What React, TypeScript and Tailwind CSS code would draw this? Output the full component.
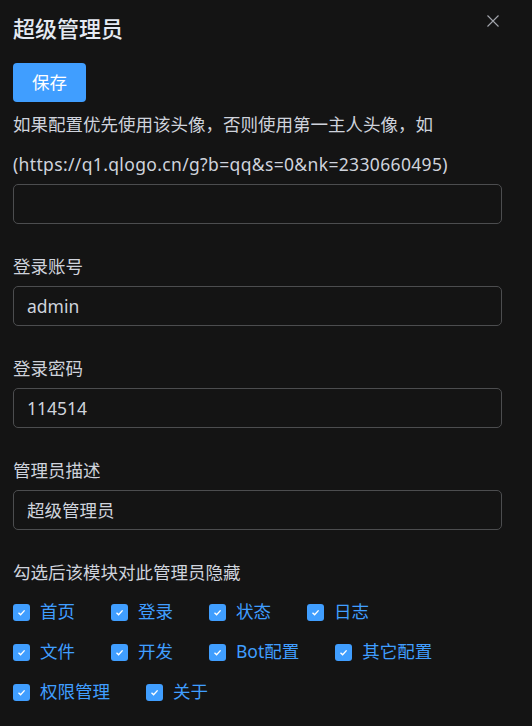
import React from 'react';

const font = { fontFamily: '"Noto Sans", "Noto Sans CJK SC", sans-serif' };

const modules = [
  ['首页', '登录', '状态', '日志'],
  ['文件', '开发', 'Bot配置', '其它配置'],
  ['权限管理', '关于'],
];

const Check = ({ label }: { label: string }) => (
  <div className="flex items-center mr-[36px] h-[40px]">
    <span className="w-[17px] h-[17px] rounded-[3px] bg-[#409eff] flex items-center justify-center">
      <svg width="11" height="11" viewBox="0 0 11 11" fill="none">
        <path d="M2.5 5.8 L4.6 7.8 L8.6 3.4" stroke="white" strokeWidth="1.4" />
      </svg>
    </span>
    <span className="ml-[10px] text-[17.5px] text-[#409eff] leading-none">{label}</span>
  </div>
);

const Field = ({ label, value }: { label: string; value: string }) => (
  <div className="mt-[22px]">
    <div className="h-[40px] leading-[40px] text-[17.5px] text-[#cfd3dc]">{label}</div>
    <div className="h-[40px] rounded-[5px] border border-[#4c4d4f] flex items-center px-[13px] text-[17.5px] text-[#cfd3dc]">
      {value}
    </div>
  </div>
);

export default function App() {
  return (
    <div className="w-[532px] h-[726px] overflow-hidden bg-[#141414] pl-[13px] pr-[30px]" style={font}>
      <div className="flex items-start justify-between h-[63px]">
        <div className="mt-[13px] text-[22px] leading-[30px] font-medium text-[#e5eaf3]">超级管理员</div>
        <svg className="mt-[15px] mr-[3px]" width="12" height="12" viewBox="0 0 12 12" fill="none">
          <path d="M0.5 0.5 L11.5 11.5 M11.5 0.5 L0.5 11.5" stroke="#a3a6ad" strokeWidth="1.1" />
        </svg>
      </div>
      <button className="w-[73px] h-[39px] rounded-[4px] bg-[#409eff] text-white text-[17.5px] flex items-center justify-center">
        保存
      </button>
      <div className="mt-[2px] text-[17.5px] leading-[40px] text-[#cfd3dc] break-words">
        如果配置优先使用该头像，否则使用第一主人头像，如
        <span className="tracking-[0.35px]">(https://q1.qlogo.cn/g?b=qq&amp;s=0&amp;nk=2330660495)</span>
      </div>
      <div className="h-[40px] rounded-[5px] border border-[#4c4d4f]" />
      <Field label="登录账号" value="admin" />
      <Field label="登录密码" value="114514" />
      <Field label="管理员描述" value="超级管理员" />
      <div className="mt-[22px]">
        <div className="h-[40px] leading-[40px] text-[17.5px] text-[#cfd3dc]">勾选后该模块对此管理员隐藏</div>
        {modules.map((row, i) => (
          <div key={i} className="flex">
            {row.map((m) => (
              <Check key={m} label={m} />
            ))}
          </div>
        ))}
      </div>
    </div>
  );
}
